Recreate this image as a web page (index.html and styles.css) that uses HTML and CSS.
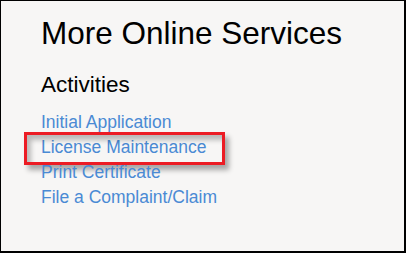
FILE: index.html
```html
<!DOCTYPE html>
<html lang="en">
<head>
  <meta charset="UTF-8" />
  <meta name="viewport" content="width=device-width, initial-scale=1.0"/>
  <title>More Online Services</title>
  <link rel="stylesheet" href="styles.css">
</head>
<body>

  <div class="panel">
    <h1>More Online Services</h1>

    <h2>Activities</h2>

    <ul class="links">
      <li><a href="#">Initial Application</a></li>
      <li class="marked"><a href="#">License Maintenance</a><span class="highlight"></span></li>
      <li><a href="#">Print Certificate</a></li>
      <li><a href="#">File a Complaint/Claim</a></li>
    </ul>
  </div>

</body>
</html>
```

FILE: styles.css
```css
body {
  margin: 0;
  font-family: "Liberation Sans", Arial, sans-serif;
}

.panel {
  box-sizing: border-box;
  width: 406px;
  height: 253px;
  padding: 14px 0 0 40px;
  background: #f7f6f5;
  border: 1px solid #000;
  border-right-width: 2px;
  border-bottom-width: 2px;
}

h1 {
  margin: 0;
  font-size: 31.5px;
  line-height: 36px;
  font-weight: normal;
  color: #000;
}

h2 {
  margin: 21px 0 0;
  font-size: 22.5px;
  line-height: 26px;
  font-weight: normal;
  color: #000;
}

.links {
  list-style: none;
  margin: 12px 0 0;
  padding: 0;
  font-size: 17.5px;
  line-height: 25px;
}

.links li {
  position: relative;
}

.links a {
  color: #4a8ad4;
  text-decoration: none;
}

.highlight {
  position: absolute;
  left: -17px;
  top: -3px;
  width: 195px;
  height: 27px;
  border: 3px solid #ec1c24;
  box-shadow: 4px 5px 5px rgba(0, 0, 0, 0.32), inset 4px 5px 5px rgba(0, 0, 0, 0.25);
}
```
